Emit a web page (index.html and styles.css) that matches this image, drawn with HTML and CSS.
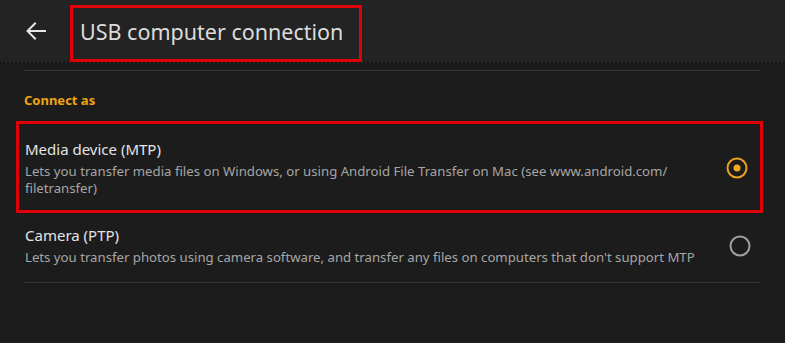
FILE: index.html
```html
<!DOCTYPE html>
<html>
<head>
<meta charset="utf-8">
<link rel="stylesheet" href="styles.css">
</head>
<body>
<header class="topbar">
  <svg class="back" width="24" height="24" viewBox="0 0 24 24"><path d="M21 12H4M11 4.5L3.5 12L11 19.5" fill="none" stroke="#e6e6e6" stroke-width="2" stroke-linecap="square"/></svg>
  <div class="title-box"><span class="title">USB computer connection</span></div>
</header>
<main class="content">
  <div class="divider"></div>
  <div class="section">Connect as</div>
  <div class="option option-hl">
    <div class="text">
      <div class="opt-title">Media device (MTP)</div>
      <div class="opt-desc">Lets you transfer media files on Windows, or using Android File Transfer on Mac (see www.android.com/<br>filetransfer)</div>
    </div>
    <svg class="radio" width="22" height="22" viewBox="0 0 22 22"><circle cx="11" cy="11" r="9.5" fill="none" stroke="#e8a41c" stroke-width="2"/><circle cx="11" cy="11" r="3.5" fill="#f0a820"/></svg>
  </div>
  <div class="option option-plain">
    <div class="text">
      <div class="opt-title">Camera (PTP)</div>
      <div class="opt-desc">Lets you transfer photos using camera software, and transfer any files on computers that don't support MTP</div>
    </div>
    <svg class="radio" width="22" height="22" viewBox="0 0 22 22"><circle cx="11" cy="11" r="9.5" fill="none" stroke="#a0a0a0" stroke-width="2"/></svg>
  </div>
  <div class="divider"></div>
</main>
</body>
</html>
```
FILE: styles.css
```css
html, body {
  margin: 0;
  padding: 0;
  background: #1c1c1c;
  font-family: "Noto Sans", "Open Sans", sans-serif;
  height: 100%;
}
.topbar {
  height: 62px;
  background: #232323;
  display: flex;
  align-items: flex-start;
  padding-left: 24px;
  border-bottom: 2px dotted #141414;
}
.back {
  margin-top: 19px;
  flex: none;
}
.title-box {
  margin-left: 22px;
  margin-top: 5px;
  width: 279px;
  height: 47px;
  border: 3px solid #e0000a;
  display: flex;
  align-items: center;
  padding: 0 0 4px 7px;
}
.title {
  color: #dcdcdc;
  font-size: 21.5px;
}
.content {
  padding: 0 25px 0 24px;
}
.divider {
  height: 1px;
  background: #343434;
}
.content > .divider:first-child {
  margin-top: 6px;
}
.section {
  margin-top: 20px;
  color: #eea513;
  font-size: 13px;
  font-weight: bold;
  line-height: 18px;
  height: 18px;
}
.option {
  display: flex;
  align-items: center;
  justify-content: space-between;
}
.option-hl {
  margin: 12px -3px 0 -8px;
  border: 3px solid #e0000a;
  padding: 15px 6px 13px 6px;
}
.option-hl .radio { margin-right: 6px; }
.option-plain {
  margin-top: 12px;
  padding: 0 9px 16px 1px;
}
.opt-title {
  color: #e4e4e4;
  font-size: 15px;
  line-height: 20px;
}
.opt-desc {
  margin-top: 4px;
  color: #a6a6a6;
  font-size: 13.2px;
  line-height: 17px;
}
.radio { flex: none; }
```
